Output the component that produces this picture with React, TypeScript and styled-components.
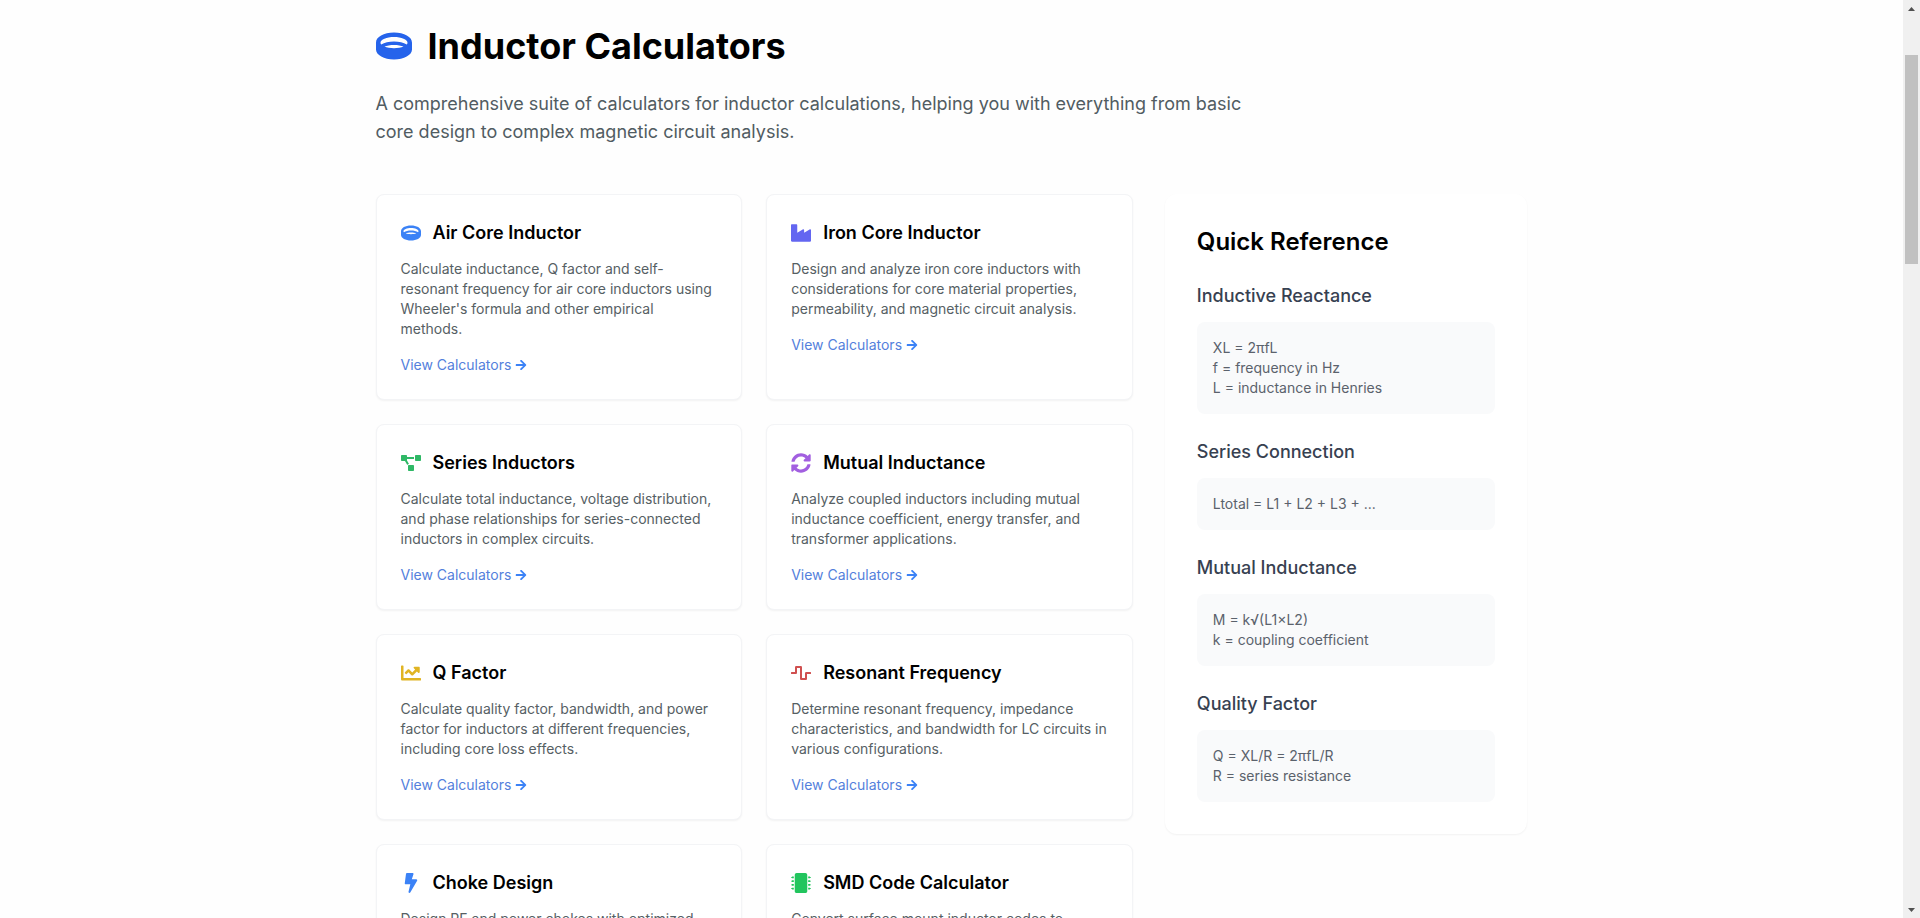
import React from 'react';
import styled, { createGlobalStyle } from 'styled-components';
import type { IconType } from 'react-icons';
import {
  FaArrowRight,
  FaBolt,
  FaChartLine,
  FaIndustry,
  FaMicrochip,
  FaProjectDiagram,
  FaRing,
  FaSyncAlt,
  FaWaveSquare,
} from 'react-icons/fa';

const GlobalStyle = createGlobalStyle`
  *, *::before, *::after { box-sizing: border-box; }
  body {
    margin: 0;
    background: #fefefe;
    color: #000;
    font-family: Inter, "Liberation Sans", sans-serif;
    font-size: 16px;
    line-height: 24px;
  }
  h1, h2, h3, p, ul { margin: 0; padding: 0; }
  svg { display: block; flex-shrink: 0; }
`;

const Shell = styled.div`
  display: flex;
  height: 100vh;
`;

const Page = styled.main`
  flex: 1;
  min-width: 0;
  overflow-y: auto;
  scrollbar-width: none;
`;

const Container = styled.div`
  max-width: 1200px;
  margin: 0 auto;
  padding: 26px 24px 48px;
`;

const Header = styled.header`
  display: grid;
  gap: 24px;
  margin-bottom: 48px;
`;

const TitleRow = styled.div`
  display: flex;
  align-items: center;
  gap: 16px;
  color: #2563eb;
  font-size: 36px;
`;

const Title = styled.h1`
  color: #000;
  font-size: 36px;
  font-weight: 700;
  line-height: 40px;
`;

const Lead = styled.p`
  max-width: 896px;
  color: #515c62;
  font-size: 18px;
  line-height: 28px;
`;

const Columns = styled.div`
  display: grid;
  grid-template-columns: repeat(3, minmax(0, 1fr));
  gap: 32px;
  align-items: start;
`;

const CardGrid = styled.section`
  grid-column: span 2;
  display: grid;
  grid-template-columns: repeat(2, minmax(0, 1fr));
  gap: 24px;
`;

const Card = styled.article`
  padding: 24px;
  background: #fff;
  border: 1px solid #f3f4f6;
  border-radius: 8px;
  box-shadow: 0 1px 2px rgba(0, 0, 0, 0.05);
`;

const CardHead = styled.div<{ $color: string }>`
  display: flex;
  align-items: center;
  gap: 12px;
  margin-bottom: 12px;
  color: ${({ $color }) => $color};
  font-size: 20px;
`;

const CardIcon = styled.span`
  display: flex;
  justify-content: center;
  width: 20px;
`;

const CardTitle = styled.h2`
  color: #000;
  font-size: 18px;
  font-weight: 600;
  line-height: 28px;
`;

const CardText = styled.p`
  margin-bottom: 16px;
  color: #566064;
  font-size: 14px;
  line-height: 20px;
`;

const CardLink = styled.a`
  display: flex;
  align-items: center;
  gap: 4px;
  width: fit-content;
  color: #547fdc;
  font-size: 14px;
  line-height: 20px;
  text-decoration: none;

  svg {
    color: #3b82f6;
    font-size: 12px;
  }
`;

const Sidebar = styled.aside`
  padding: 32px;
  background: #fff;
  border-radius: 12px;
  box-shadow: 0 1px 2px rgba(0, 0, 0, 0.05);
`;

const SidebarTitle = styled.h2`
  font-size: 24px;
  font-weight: 600;
  line-height: 32px;
`;

const FormulaGroup = styled.section`
  margin-top: 24px;
`;

const FormulaTitle = styled.h3`
  margin-bottom: 12px;
  color: #374151;
  font-size: 18px;
  font-weight: 500;
  line-height: 28px;
`;

const FormulaBox = styled.div`
  padding: 16px;
  background: #f9fafb;
  border-radius: 8px;
  color: #5b626c;
  font-size: 14px;
  line-height: 20px;
`;

const ScrollRail = styled.div`
  display: flex;
  flex-direction: column;
  width: 17px;
  background: #f0f0f0;
`;

const ScrollArrow = styled.svg`
  width: 17px;
  height: 17px;
  fill: #505050;
`;

const ScrollTrack = styled.div`
  flex: 1;
  display: grid;
  grid-template-rows: 38fr 209fr 637fr;
  padding: 0 2px;
`;

const ScrollThumb = styled.div`
  grid-row: 2;
  background: #c1c1c1;
`;

interface Calculator {
  title: string;
  text: string;
  color: string;
  icon: IconType;
}

const calculators: Calculator[] = [
  {
    title: 'Air Core Inductor',
    text: "Calculate inductance, Q factor and self-resonant frequency for air core inductors using Wheeler's formula and other empirical methods.",
    color: '#3b82f6',
    icon: FaRing,
  },
  {
    title: 'Iron Core Inductor',
    text: 'Design and analyze iron core inductors with considerations for core material properties, permeability, and magnetic circuit analysis.',
    color: '#6366f1',
    icon: FaIndustry,
  },
  {
    title: 'Series Inductors',
    text: 'Calculate total inductance, voltage distribution, and phase relationships for series-connected inductors in complex circuits.',
    color: '#2fb866',
    icon: FaProjectDiagram,
  },
  {
    title: 'Mutual Inductance',
    text: 'Analyze coupled inductors including mutual inductance coefficient, energy transfer, and transformer applications.',
    color: '#a25fe0',
    icon: FaSyncAlt,
  },
  {
    title: 'Q Factor',
    text: 'Calculate quality factor, bandwidth, and power factor for inductors at different frequencies, including core loss effects.',
    color: '#e0b423',
    icon: FaChartLine,
  },
  {
    title: 'Resonant Frequency',
    text: 'Determine resonant frequency, impedance characteristics, and bandwidth for LC circuits in various configurations.',
    color: '#d05050',
    icon: FaWaveSquare,
  },
  {
    title: 'Choke Design',
    text: 'Design RF and power chokes with optimized core selection, winding configuration, and thermal performance.',
    color: '#3b82f6',
    icon: FaBolt,
  },
  {
    title: 'SMD Code Calculator',
    text: 'Convert surface mount inductor codes to inductance values and tolerance specifications.',
    color: '#22c55e',
    icon: FaMicrochip,
  },
];

const formulas = [
  { title: 'Inductive Reactance', lines: ['XL = 2πfL', 'f = frequency in Hz', 'L = inductance in Henries'] },
  { title: 'Series Connection', lines: ['Ltotal = L1 + L2 + L3 + ...'] },
  { title: 'Mutual Inductance', lines: ['M = k√(L1×L2)', 'k = coupling coefficient'] },
  { title: 'Quality Factor', lines: ['Q = XL/R = 2πfL/R', 'R = series resistance'] },
];

export default function App() {
  return (
    <Shell>
      <GlobalStyle />
      <Page>
        <Container>
          <Header>
            <TitleRow>
              <FaRing aria-hidden />
              <Title>Inductor Calculators</Title>
            </TitleRow>
            <Lead>
              A comprehensive suite of calculators for inductor calculations, helping you with
              everything from basic core design to complex magnetic circuit analysis.
            </Lead>
          </Header>
          <Columns>
            <CardGrid>
              {calculators.map(({ title, text, color, icon: Icon }) => (
                <Card key={title}>
                  <CardHead $color={color}>
                    <CardIcon>
                      <Icon aria-hidden />
                    </CardIcon>
                    <CardTitle>{title}</CardTitle>
                  </CardHead>
                  <CardText>{text}</CardText>
                  <CardLink href="#">
                    View Calculators
                    <FaArrowRight aria-hidden />
                  </CardLink>
                </Card>
              ))}
            </CardGrid>
            <Sidebar>
              <SidebarTitle>Quick Reference</SidebarTitle>
              {formulas.map(({ title, lines }) => (
                <FormulaGroup key={title}>
                  <FormulaTitle>{title}</FormulaTitle>
                  <FormulaBox>
                    {lines.map((line) => (
                      <p key={line}>{line}</p>
                    ))}
                  </FormulaBox>
                </FormulaGroup>
              ))}
            </Sidebar>
          </Columns>
        </Container>
      </Page>
      <ScrollRail aria-hidden>
        <ScrollArrow viewBox="0 0 17 17">
          <path d="M5 11h7L8.500 7z" />
        </ScrollArrow>
        <ScrollTrack>
          <ScrollThumb />
        </ScrollTrack>
        <ScrollArrow viewBox="0 0 17 17">
          <path d="M5 7h7L8.500 11z" />
        </ScrollArrow>
      </ScrollRail>
    </Shell>
  );
}
